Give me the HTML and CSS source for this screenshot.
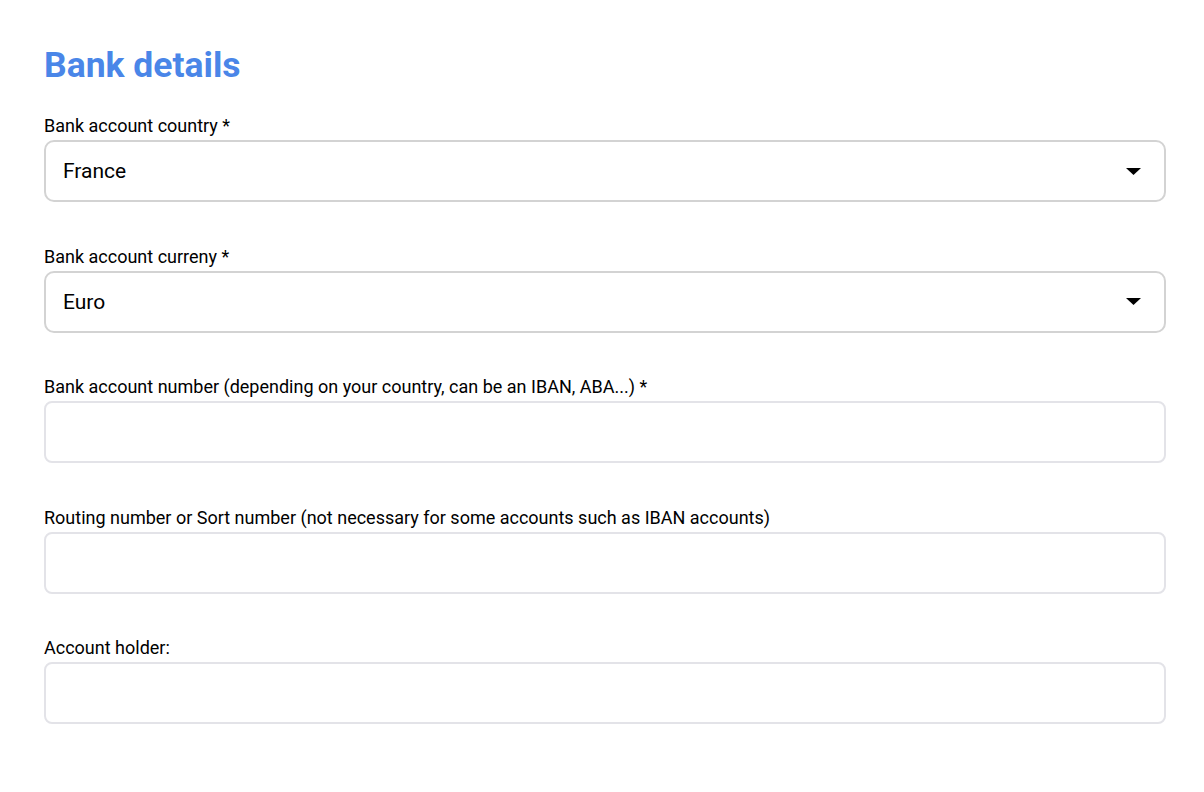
FILE: index.html
```html
<!DOCTYPE html>
<html lang="en">
<head>
<meta charset="utf-8">
<title>Bank details</title>
<link rel="stylesheet" href="styles.css">
</head>
<body>
<main class="card">
  <h1 class="title">Bank details</h1>
  <form class="form">
    <div class="field">
      <label class="label">Bank account country *</label>
      <div class="select">
        <span class="value">France</span>
        <svg class="caret" width="15" height="7" viewBox="0 0 15 7"><path d="M0 0H15L7.5 7Z" fill="#000"/></svg>
      </div>
    </div>
    <div class="field">
      <label class="label">Bank account curreny *</label>
      <div class="select">
        <span class="value">Euro</span>
        <svg class="caret" width="15" height="7" viewBox="0 0 15 7"><path d="M0 0H15L7.5 7Z" fill="#000"/></svg>
      </div>
    </div>
    <div class="field">
      <label class="label">Bank account number (depending on your country, can be an IBAN, ABA...) *</label>
      <input class="input" type="text">
    </div>
    <div class="field">
      <label class="label">Routing number or Sort number (not necessary for some accounts such as IBAN accounts)</label>
      <input class="input" type="text">
    </div>
    <div class="field">
      <label class="label">Account holder:</label>
      <input class="input" type="text">
    </div>
  </form>
</main>
</body>
</html>
```

FILE: styles.css
```css
html, body {
  margin: 0;
  padding: 0;
  background: #fff;
}
body {
  font-family: Roboto, "Liberation Sans", Arial, sans-serif;
  color: #000;
}
.card {
  padding: 43px 38px 40px 44px;
}
.title {
  margin: 0;
  font-size: 35.5px;
  font-weight: 700;
  color: #4a86e8;
  line-height: 44px;
}
.form {
  margin-top: 29px;
  display: flex;
  flex-direction: column;
  gap: 44.5px;
}
.field {
  display: flex;
  flex-direction: column;
  gap: 4px;
}
.label {
  display: block;
  font-size: 18px;
  line-height: 20px;
}
.select {
  box-sizing: border-box;
  height: 62px;
  border: 2px solid #d3d3d3;
  border-radius: 10px;
  display: flex;
  align-items: center;
  justify-content: space-between;
  padding: 0 23px 0 17px;
}
.value {
  font-size: 21px;
}
.caret {
  display: block;
}
.input {
  box-sizing: border-box;
  height: 62px;
  width: 100%;
  margin: 0;
  border: 2px solid #e3e3e8;
  border-radius: 8px;
  background: #fff;
  font: inherit;
  outline: none;
}
```
